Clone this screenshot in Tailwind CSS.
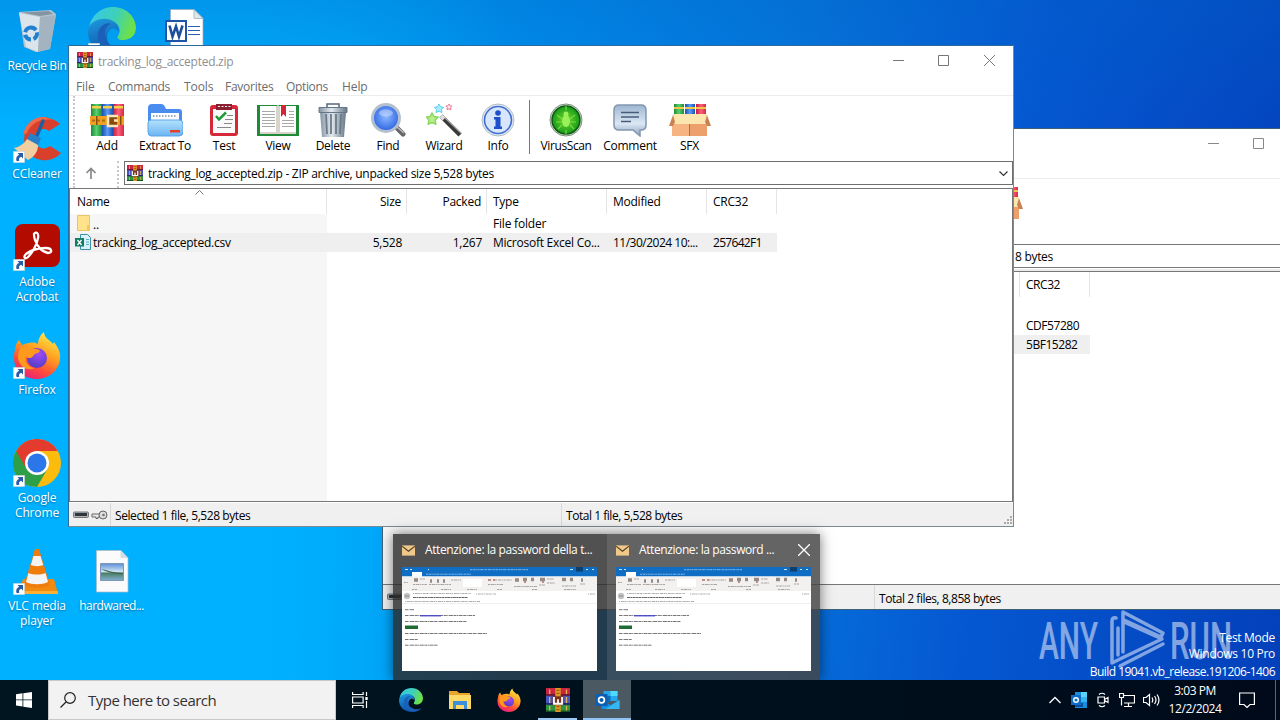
<!DOCTYPE html>
<html lang="en">
<head>
  <meta charset="UTF-8">
  <title>tracking_log_accepted.zip</title>
  <script src="https://cdn.jsdelivr.net/npm/@tailwindcss/browser@4"></script>
</head>
<body class="overflow-hidden bg-[#00adfb]">

  <!-- Icon sprites -->
  <svg class="absolute w-0 h-0" aria-hidden="true">
    <defs>
      <linearGradient id="gEdge" x1="0" y1="0" x2="1" y2="0.3"><stop offset="0" stop-color="#36c8ee"/><stop offset="0.6" stop-color="#3fd0b8"/><stop offset="1" stop-color="#6be04c"/></linearGradient>
      <linearGradient id="gEdge2" x1="0" y1="0" x2="0.4" y2="1"><stop offset="0" stop-color="#1f9be0"/><stop offset="1" stop-color="#0c4ea6"/></linearGradient>
      <linearGradient id="gFox" x1="0.8" y1="0" x2="0.3" y2="1"><stop offset="0" stop-color="#fff04a"/><stop offset="0.45" stop-color="#ff9a1f"/><stop offset="0.75" stop-color="#ff4a3c"/><stop offset="1" stop-color="#ea1f7d"/></linearGradient>
      <radialGradient id="gFoxIn" cx="0.6" cy="0.3" r="0.8"><stop offset="0" stop-color="#a04af5"/><stop offset="1" stop-color="#4a3cc0"/></radialGradient>
      <linearGradient id="gFolder" x1="0" y1="0" x2="0" y2="1"><stop offset="0" stop-color="#b4e2fc"/><stop offset="1" stop-color="#6ab4f2"/></linearGradient>
      <linearGradient id="gMetal" x1="0" y1="0" x2="1" y2="0"><stop offset="0" stop-color="#8594a3"/><stop offset="0.45" stop-color="#e2e9ef"/><stop offset="1" stop-color="#667686"/></linearGradient>
      <radialGradient id="gLens" cx="0.5" cy="0.45" r="0.6"><stop offset="0" stop-color="#8fb8ff"/><stop offset="1" stop-color="#1f5be0"/></radialGradient>
      <radialGradient id="gVirus"><stop offset="0" stop-color="#6fe02a"/><stop offset="1" stop-color="#17981a"/></radialGradient>
      <linearGradient id="gComment" x1="0" y1="0" x2="0" y2="1"><stop offset="0" stop-color="#9db6d2"/><stop offset="0.6" stop-color="#dbe7f3"/><stop offset="1" stop-color="#8ba4c2"/></linearGradient>
      <linearGradient id="gPic" x1="0" y1="0" x2="0" y2="1"><stop offset="0" stop-color="#5b8fd8"/><stop offset="0.5" stop-color="#d5e8f5"/><stop offset="0.55" stop-color="#4d7c62"/><stop offset="1" stop-color="#7fb0d0"/></linearGradient>
      <linearGradient id="gGreen" x1="0" y1="0" x2="1" y2="0"><stop offset="0" stop-color="#1d8a36"/><stop offset="0.5" stop-color="#58d070"/><stop offset="1" stop-color="#1d8a36"/></linearGradient>
      <linearGradient id="gBlue" x1="0" y1="0" x2="1" y2="0"><stop offset="0" stop-color="#1c4fb0"/><stop offset="0.5" stop-color="#5a9cf4"/><stop offset="1" stop-color="#1c4fb0"/></linearGradient>
      <linearGradient id="gRed" x1="0" y1="0" x2="1" y2="0"><stop offset="0" stop-color="#c01c40"/><stop offset="0.5" stop-color="#fa6078"/><stop offset="1" stop-color="#d82848"/></linearGradient>
    </defs>

    <symbol id="rar" viewBox="0 0 16 16">
      <path fill="#cc2340" d="M0 0h16v5H0z"/><path fill="#4a55c0" d="M0 5h16v6H0z"/><path fill="#2f9440" d="M0 11h16v5H0z"/>
      <path fill="#701838" d="M0 4h16v1.200H0z"/><path fill="#232a70" d="M0 10h16v1.200H0z"/><path fill="#145220" d="M0 15h16v1H0z"/>
      <path fill="#e0b050" d="M2 1h.9v3H2zM2 6h.9v4H2zM2 12h.9v3H2zM13.200 1h.9v3h-.9zM13.200 6h.9v4h-.9zM13.200 12h.9v3h-.9z"/>
      <path fill="#e09a24" d="M6.200 0h3.600v16H6.200z"/><path stroke="#8a4c08" stroke-width=".7" d="M7 1.500h2M7 3.500h2M7 12.500h2M7 14.500h2"/>
      <path fill="#7c3018" d="M4.500 5.500h7v6h-7z"/><path fill="none" stroke="#fff" stroke-width="1.200" d="M5.300 6v4.500h5.400V6M8 7.500v3"/>
    </symbol>

    <symbol id="shortcut" viewBox="0 0 12 12">
      <path fill="#fff" stroke="#b9c4cf" stroke-width=".6" d="M.3.3h11.400v11.400H.3z"/>
      <path fill="#2a5ca8" d="M4.500 2h5.500v5.500L8.200 5.800C6 6.500 5.800 8 6.200 10H3.600C2.600 7 4 4.700 6.200 3.800z"/>
    </symbol>

    <symbol id="edge" viewBox="0 0 48 48">
      <path fill="url(#gEdge)" d="M1 21C3 8 13 0 25 0c13 0 22 9 23 20 0 8-5 13-13 13-5 0-6-2-5-4 2-3 2-6 1-9-3-8-20-10-30 1z"/>
      <path fill="url(#gEdge2)" d="M0 25c0-10 11-14 19-13 7 1 12 6 12 13-2-4-7-5-10-1-5 7 0 19 12 20 4 0 8-1 12-4C40 46 33 48 25 48 11 48 0 38 0 25z"/>
      <path fill="#1b5fb8" d="M17 17c-6 3-9 9-6 17 3 9 12 14 20 13 6-1 11-4 14-7-5 3-10 3-14 2-9-2-15-9-14-17 0-4 3-7 6-8-2-1-4-1-6 0z"/>
    </symbol>

    <symbol id="firefox" viewBox="0 0 48 48">
      <path fill="url(#gFox)" d="M2 19c0-4 2-8 4-10l3 5c3-1 4-2 7-2 4-1 7 0 9 1 0-5 3-10 6-12 0 6 6 8 9 12l1-2c4 5 7 11 6 17-1 11-11 20-23 20C11 48 1 39 1 27c0-3 0-5 1-8z"/>
      <circle cx="24" cy="27" r="10" fill="url(#gFoxIn)"/>
      <path fill="#ff9a1f" d="M9 15c4-1 7 0 10 3 4 0 7 0 8 2-1 2-4 2-5 3-2 1-2 4-5 4-2 0-4 0-4-2-2 6 3 12 9 12-8 4-16-2-17-10 0-5 1-9 4-12z"/>
    </symbol>

    <symbol id="outlook" viewBox="0 0 24 24">
      <path fill="#28a8ea" d="M8 3h14v10H8z"/><path fill="#0f6cbd" d="M8 8h7v6H8z"/><path fill="#50d9ff" d="M15 3h7v5h-7z"/>
      <path fill="#1490df" d="M6 12l9 5 9-5v9H6z"/><path fill="#35b8f1" d="M24 12v9H10z"/>
      <path fill="#0a5fb4" d="M0 6h12v12H0z"/><circle cx="6" cy="12" r="2.900" fill="none" stroke="#fff" stroke-width="1.700"/>
    </symbol>

    <symbol id="outlookTray" viewBox="0 0 16 16">
      <path fill="#1590e0" d="M4 0h12v16H4z"/><path fill="#5ad4fa" d="M10 0h6v5h-6z"/><path fill="#35b4ee" d="M10 5h6v5h-6z"/><path fill="#0a4f9c" d="M4 11h8v4H4z"/>
      <path fill="#0f6cc4" d="M0 3h10v10H0z"/><circle cx="5" cy="8" r="2.300" fill="none" stroke="#fff" stroke-width="1.400"/>
    </symbol>

    <symbol id="sfx" viewBox="0 0 42 34">
      <path fill="url(#gGreen)" d="M5 1h10v13H5z"/><path fill="url(#gBlue)" d="M16 1h10v13H16z"/><path fill="url(#gRed)" d="M27 1h10v13H27z"/>
      <path fill="#f2c84a" d="M5 4h10v2H5zM16 4h10v2H16zM27 4h10v2H27z"/>
      <path fill="#fbe6b0" d="M4 11h34v10H4z"/><path fill="#eda06c" d="M3 21h35v12H3z"/><path fill="#f5b482" d="M3 21h17v12H3z"/>
      <path fill="#c98252" d="M4 12L0 23h4l2-4zM38 12l4 11h-4l-2-4z"/><path stroke="#b86e3c" d="M20.500 21v12"/>
    </symbol>

    <symbol id="envelope" viewBox="0 0 14 11"><path fill="#efc88a" d="M0 0h14v11H0z"/><path fill="none" stroke="#4a3a24" stroke-width="1.200" d="M0 .8l7 5.500 7-5.500"/></symbol>

    <symbol id="thumb" viewBox="0 0 195 104">
      <path fill="#fff" d="M0 0h195v104H0z"/><path fill="#0f6dc4" d="M0 0h195v9.500H0z"/><path fill="#fff" d="M10 5h10v5H10z"/>
      <path fill="#f3f1ef" d="M0 9.500h195V24H0z"/><path fill="#fff" d="M61 12h19v8H61z"/><path fill="#0c3e6e" d="M174 0h7v4.500h-7z"/>
      <path stroke="#8cc0ec" stroke-dasharray="2 .6 3 .5 1 .5" d="M68 2.700h58M24 7.200h45" stroke-width=".9"/><path stroke="#d6e8f6" stroke-width="1.200" d="M3 2.500h3M8 2.500h2M26 2.500h1M168 2.500h3M184 2.500h2M190 2.500h2"/>
      <path stroke="#958a84" stroke-width="3.500" d="M12 13h4M28 14h2M35 14h2M41 14h2M113 13h4M121 12.500h4M129 12.500h3M138 12.500h5M160 12.500h4M168 12.500h3M179 13h2"/>
      <path stroke="#c09088" stroke-width="2" d="M86 13h3M91 13h2M116 12h1M122 15h2M140 15h2"/>
      <path stroke="#a39c98" stroke-width=".9" stroke-dasharray="2 .6 4 .6 1 .5" d="M2 15.500h4M18 12h5M11 17.500h14M27 17.500h22M49 13h10M86 17.500h15M93 13h17M112 19.500h23M137 18h6M145 12h7M145 16h8M160 19h14M178 17h5M10 22.500h5M39 22.500h10M65 22.500h10M95 22.500h5M130 22.500h5M162 22.500h12"/>
      <circle cx="5" cy="29" r="3.200" fill="#c4c4c4"/><path stroke="#888" d="M3 29h4"/>
      <path stroke="#999" stroke-width=".8" stroke-dasharray="1 .8 3 .5 2 .5" d="M11 26.500h58M74 27h20M186 27h7M3 34.500h75"/><path stroke="#666" stroke-width="1" stroke-dasharray="3 .4 2 .3" d="M11 30.500h55"/>
      <path stroke="#e4e4e4" stroke-width=".6" d="M0 36.500h195"/>
      <path stroke="#777" stroke-width="1" stroke-dasharray="3 .5 1 .6 4 .6" d="M3 42.700h9M3 48.500h70M3 54.500h62M3 66.500h82M3 72.500h13M3 78.200h33"/>
      <path stroke="#4040d0" stroke-width="1.200" d="M18 48.800h21"/><path fill="#1f6b34" d="M3 58.500h13v3.500H3z"/>
    </symbol>

    <symbol id="drive" viewBox="0 0 36 12">
      <rect x=".5" y="3" width="15" height="5.500" rx="1" fill="#aab2b8" stroke="#777"/><path fill="#2f363b" d="M2 4h12v3H2z"/>
      <path fill="#e8e8e8" stroke="#666" d="M19 5h9v3h-3v1.500h-2V8h-4z"/><circle cx="30" cy="6" r="4" fill="#ddd" stroke="#666"/><circle cx="30.500" cy="6" r="1.300" fill="#777"/>
    </symbol>
  </svg>

  <div class="relative w-[1280px] h-[720px] overflow-hidden font-['Open_Sans',sans-serif] text-xs text-black">

    <!-- Wallpaper -->
    <div class="absolute inset-0 bg-[linear-gradient(97deg,#00a4f6_0%,#00adfb_20%,#0090ee_40%,#0675dc_60%,#0558d2_76%,#0340ba_100%)]"></div>
    <div class="absolute left-0 top-0 w-[500px] h-full bg-[linear-gradient(90deg,#00b1ff_50%,transparent)]"></div>
    <div class="absolute left-0 top-0 w-full h-32 bg-[linear-gradient(180deg,#0060c455,transparent)]"></div>

    <!-- Desktop icons -->
    <div class="absolute left-0 top-[7px] flex text-white text-[12px] leading-[15px] tracking-[-0.15px] text-center [text-shadow:0_1px_2px_#00406099]">
      <div class="w-[74px] flex flex-col">
        <div class="h-[108px] flex flex-col items-center gap-[3px]">
          <svg class="w-12 h-12 shrink-0" viewBox="0 0 48 48">
            <path fill="#b4c4ce" d="M6 5l32-2 5 4-6 35-14 3-12-5z"/><path fill="#dbe4ea" d="M6 6l21 4-2 35-12-5z"/><path fill="#a3b4c0" d="M27 10l16-2-6 34-12 3z"/><path fill="#8494a0" d="M9 5.500l27-1.500 4 3-13 2z"/>
            <path fill="none" stroke="#1f7fd0" stroke-width="4" stroke-dasharray="8 2.500" d="M18 20.500a6 6 0 1 0 .1 0z"/>
          </svg>
          <span class="whitespace-nowrap tracking-[-0.35px]">Recycle Bin</span>
        </div>
        <div class="h-[108px] flex flex-col items-center gap-[3px]">
          <span class="relative w-12 h-12 shrink-0">
            <svg class="w-12 h-12" viewBox="0 0 48 48">
              <path fill="#d8402c" d="M47 9L36 16c-7-5-15 0-14 9 1 8 9 11 15 6l11 7C39 48 24 47 17 39 8 29 10 13 20 6c8-6 20-4 27 3z"/><path fill="#ee6a4a" d="M10 20C12 8 22 1 32 2l8 3c-14-2-22 4-26 13z"/>
              <path stroke="#1d5fa0" stroke-width="3.500" stroke-linecap="round" d="M30 6l-7 17"/><path fill="#2a80c8" d="M17 18l11 5-3 8-11-6z"/><path fill="#f2cfa0" d="M14 24l11 6c0 7-4 12-10 15L1 33c5-1 10-4 13-9z"/>
            </svg>
            <svg class="absolute left-0 bottom-0 w-3 h-3"><use href="#shortcut"/></svg>
          </span>
          <span>CCleaner</span>
        </div>
        <div class="h-[108px] flex flex-col items-center gap-[3px]">
          <span class="relative w-12 h-12 shrink-0">
            <svg class="w-12 h-12" viewBox="0 0 48 48"><rect x="2" y="1" width="45" height="43" rx="8" fill="#b30b00"/>
              <path fill="none" stroke="#fff" stroke-width="2.300" stroke-linejoin="round" d="M21 11c2-3 5-1 4 4-1 7-6 15-10 19-3 3-5 0-2-3 5-4 13-6 20-6 6 0 7 5 2 5-6-1-11-7-13-13-1-3-1-5-1-6z"/></svg>
            <svg class="absolute left-0 bottom-0 w-3 h-3"><use href="#shortcut"/></svg>
          </span>
          <span>Adobe<br>Acrobat</span>
        </div>
        <div class="h-[108px] flex flex-col items-center gap-[3px]">
          <span class="relative w-12 h-12 shrink-0">
            <svg class="w-12 h-12"><use href="#firefox"/></svg>
            <svg class="absolute left-0 bottom-0 w-3 h-3"><use href="#shortcut"/></svg>
          </span>
          <span>Firefox</span>
        </div>
        <div class="h-[108px] flex flex-col items-center gap-[3px]">
          <span class="relative w-12 h-12 shrink-0">
            <svg class="w-12 h-12" viewBox="0 0 48 48">
              <circle cx="24" cy="24" r="24" fill="#fbbc0e"/><path fill="#2c9f47" d="M24 24L3.200 12A24 24 0 0 0 24 48l10.400-18z"/><path fill="#e33b2e" d="M24 12h20.800A24 24 0 0 0 3.200 12l10.400 18z"/>
              <circle cx="24" cy="24" r="12" fill="#fff"/><circle cx="24" cy="24" r="9.500" fill="#2b76e8"/>
            </svg>
            <svg class="absolute left-0 bottom-0 w-3 h-3"><use href="#shortcut"/></svg>
          </span>
          <span>Google<br>Chrome</span>
        </div>
        <div class="h-[108px] flex flex-col items-center gap-[3px]">
          <span class="relative w-12 h-12 shrink-0">
            <svg class="w-12 h-12" viewBox="0 0 48 48">
              <path fill="#f28a10" d="M10 32h31l4 15H5z"/><path fill="#ffb030" d="M5 44h40v3H5z"/>
              <path fill="#f07c0c" d="M22 2h4l11 36c-5 4-21 4-26 0z"/><path fill="#f4f4f4" d="M20.500 9h7l2.700 9c-3 1.500-9 1.500-12.300 0zM15.500 26c5 2 12 2 17 0l2.500 9c-6 3-16 3-22 0z"/>
            </svg>
            <svg class="absolute left-0 bottom-0 w-3 h-3"><use href="#shortcut"/></svg>
          </span>
          <span>VLC media<br>player</span>
        </div>
      </div>
      <div class="w-[75px] flex flex-col">
        <div class="h-[540px] flex flex-col items-center relative">
          <svg class="w-12 h-12"><use href="#edge"/></svg>
          <svg class="absolute left-[14px] top-9 w-3 h-3"><use href="#shortcut"/></svg>
        </div>
        <div class="flex flex-col items-center gap-[3px]">
          <svg class="w-12 h-12" viewBox="0 0 48 48">
            <path fill="#fbfbfb" stroke="#b0bcc6" stroke-width=".7" d="M8.500 3.500H33l7 7.500v34H8.500z"/><path fill="#d4dde4" d="M32.500 3.500V11H40z"/>
            <path fill="url(#gPic)" stroke="#7d96b8" d="M12.500 16.500h23v17h-23z"/><path fill="#3f6a55" d="M13 22c6 3 14 6 22 5v-1c-9 0-16-3-22-4z"/>
          </svg>
          <span class="tracking-[-0.5px]">hardwared...</span>
        </div>
      </div>
      <div class="w-[70px] flex justify-center">
        <svg class="w-12 h-12" viewBox="0 0 48 48">
          <path fill="#fff" stroke="#98a8b8" stroke-width=".7" d="M10.500 2.500H34l9 9v35H10.500z"/><path fill="#dfe6ec" stroke="#98a8b8" stroke-width=".7" d="M34 2.500v9h9z"/>
          <path stroke="#2a5fb4" d="M28 19.500h12M28 23.500h12M28 27.500h12"/><path fill="#fff" stroke="#1f54a8" stroke-width="2" d="M6 14h20v20H6z"/><path fill="none" stroke="#1f4f9c" stroke-width="2.600" d="M9.500 18.500l3 11 3.500-10 3 10 3.500-11"/>
        </svg>
      </div>
    </div>

    <!-- Watermark -->
    <svg class="absolute left-[1036px] top-[606px] w-[200px] h-[66px] opacity-50" viewBox="0 0 200 66" fill="#fff">
      <text x="3" y="53" font-family="Roboto" font-weight="500" font-size="51" textLength="59" lengthAdjust="spacingAndGlyphs">ANY</text>
      <text x="134" y="53" font-family="Roboto" font-weight="500" font-size="51" textLength="62" lengthAdjust="spacingAndGlyphs">RUN</text>
      <path fill="none" stroke="#fff" stroke-width="3.500" stroke-linejoin="round" stroke-linecap="round" d="M87 46V6l40 21-2 4-37-17M80 12q-4-1-4 3v42l10-5 40-19-38-17M82 22v27M84 60l43-22"/>
    </svg>
    <div class="absolute right-[5px] top-[630px] flex flex-col items-end text-white text-[12px] leading-[16px] tracking-[-0.3px]">
      <span>Test Mode</span>
      <span>Windows 10 Pro</span>
      <span class="mt-0.5 tracking-[-0.55px]">Build 19041.vb_release.191206-1406</span>
    </div>

    <!-- Background archive window -->
    <section class="absolute left-[382px] top-[128px] w-[946px] h-[482px] border border-[#40607a] bg-white flex flex-col">
      <div class="h-[31px] shrink-0 flex items-center justify-end pr-[17px] gap-[34px] text-[#888] pb-[3px]">
        <svg class="w-[11px] h-[11px]" viewBox="0 0 11 11"><path stroke="currentColor" d="M0 5.500h11"/></svg>
        <svg class="w-[11px] h-[11px]" viewBox="0 0 11 11"><path fill="none" stroke="currentColor" d="M.5.5h10v10H.5z"/></svg>
        <svg class="w-[11px] h-[11px] ml-px" viewBox="0 0 11 11"><path stroke="currentColor" d="M0 0l11 11M11 0L0 11"/></svg>
      </div>
      <div class="h-[18px] shrink-0"></div>
      <div class="h-[66px] shrink-0 border-t border-[#ececec] pl-[598px] pt-[7px]"><svg class="w-[42px] h-[34px]"><use href="#sfx"/></svg></div>
      <div class="h-[24px] ml-[55px] border border-[#777] flex items-center pl-[576px] pt-0.5 shrink-0 tracking-[-0.3px]">8 bytes</div>
      <div class="h-[3px] bg-[#ececec] border-t border-white shrink-0"></div>
      <div class="grow border-y border-[#777] flex">
        <div class="w-[257px] mt-[25px] bg-[#f6f6f6]"></div>
        <div class="grow"></div>
        <div class="w-[308px] flex flex-col tracking-[-0.45px]">
          <div class="flex h-[25px]"><span class="w-[71px] border-x border-[#e5e5e5] pl-1.5 leading-[26px]">CRC32</span></div>
          <div class="h-[19px] mt-[19px] pl-[7px] leading-[20px]">CDF57280</div>
          <div class="flex h-[19px] -ml-8"><span class="w-[103px] bg-[#efefef] pl-[39px] leading-[19px]">5BF15282</span></div>
        </div>
      </div>
      <div class="h-[24px] shrink-0 bg-[#f0f0f0] flex items-center">
        <svg class="w-9 h-3 ml-[4px]"><use href="#drive"/></svg>
        <span class="w-[451px] h-full border-x border-[#d8d8d8] ml-[1px]"></span>
        <span class="pl-[4px] pt-[3px] tracking-[-0.45px]">Total 2 files, 8,858 bytes</span>
      </div>
    </section>

    <!-- Front archive window -->
    <section class="absolute left-[68px] top-[45px] w-[946px] h-[482px] border border-[#2a6a9c] border-b-[#7a8a94] border-r-[#7a8a94] bg-white flex flex-col">
      <div class="h-[31px] shrink-0 flex items-center pl-2">
        <svg class="w-4 h-4 -mt-[3px]"><use href="#rar"/></svg>
        <span class="pl-[5px] text-[#909090] tracking-[-0.26px]">tracking_log_accepted.zip</span>
        <div class="ml-auto flex gap-[34px] pr-[18px] text-[#777] -mt-[3px]">
          <svg class="w-[11px] h-[11px]" viewBox="0 0 11 11"><path stroke="currentColor" d="M0 5.500h11"/></svg>
          <svg class="w-[11px] h-[11px]" viewBox="0 0 11 11"><path fill="none" stroke="currentColor" d="M.5.5h10v10H.5z"/></svg>
          <svg class="w-[11px] h-[11px] ml-px" viewBox="0 0 11 11"><path stroke="currentColor" d="M0 0l11 11M11 0L0 11"/></svg>
        </div>
      </div>
      <nav class="h-[18px] shrink-0 flex pl-[7px] leading-[19px] text-[#6c6c6c] tracking-[-0.1px]">
        <a class="w-8">File</a><a class="w-[76px] tracking-[-0.25px]">Commands</a><a class="w-[41px]">Tools</a><a class="w-[61px] tracking-[-0.25px]">Favorites</a><a class="w-[56px] tracking-[-0.35px]">Options</a><a>Help</a>
      </nav>

      <div class="shrink-0 border-t border-[#ececec] h-[93px] pl-[4px]">
        <div class="flex flex-col h-full border-l-2 border-dotted border-[#c8c8c8]">
          <!-- Toolbar -->
          <div class="flex pl-[5px] pt-[7px] h-[65px] text-center leading-4 whitespace-nowrap tracking-[-0.25px]">
            <div class="w-[54px] flex flex-col items-center gap-px">
              <svg class="w-9 h-[34px]" viewBox="0 0 36 34"><path fill="url(#gGreen)" d="M2 1h11v32H2z"/><path fill="url(#gBlue)" d="M13 1h11v32H13z"/><path fill="url(#gRed)" d="M24 1h11v32H24z"/><path fill="#f5cf45" d="M3 3h9v2.500H3zM14 3h9v2.500h-9zM25 3h9v2.500h-9z"/><path fill="#f0a020" d="M1 13h34v9H1z"/><path stroke="#b06a10" stroke-width="2" stroke-dasharray="3 2" d="M3 17.500h14"/><path fill="#8c4a10" d="M7 13h1.500v9H7zM31 13h1.500v9H31z"/><path fill="#8c4a10" d="M20 14h8v8h-8z"/><path fill="none" stroke="#fbe8b8" stroke-width="2.500" d="M29 13H19v10h10M25 17.500h4"/></svg>
              <span>Add</span></div>
            <div class="w-[62px] flex flex-col items-center gap-px">
              <svg class="w-9 h-[34px]" viewBox="0 0 36 34"><path fill="#4a8cf0" d="M1 5q0-4 4-4h9q3 0 4 3l1 2h13q3 0 3 3v13H1z"/><path fill="#fff" d="M4 10h28v10H4z"/><path stroke="#7f90a8" stroke-width="1.500" stroke-dasharray="1.500 1.500" d="M6 13h24"/><path fill="url(#gFolder)" stroke="#5ba4ec" d="M1 20q0-3 3-3h28q4 0 4 3v9q0 4-4 4H4q-3 0-3-4z"/><path fill="#e0402c" d="M23 27h10v2.500H23z"/></svg>
              <span class="tracking-[-0.4px]">Extract To</span></div>
            <div class="w-[56px] flex flex-col items-center gap-px">
              <svg class="w-8 h-[34px]" viewBox="0 0 32 34"><rect x="2" y="2" width="28" height="31" rx="3" fill="#d62838"/><path fill="#fafafa" d="M5 6h22v24H5z"/><path fill="#8a2030" d="M8 1h16v6H8z"/><path stroke="#f0f0f0" stroke-dasharray="2 1.500" d="M10 3.500h13"/><path fill="none" stroke="#1e9a38" stroke-width="2.500" d="M8 13l3 3.500 7-7"/><path stroke="#888" d="M19 12.500h6M17 16.500h8M16 20.500h8M9 24.500h14"/></svg>
              <span>Test</span></div>
            <div class="w-[52px] flex flex-col items-center gap-px">
              <svg class="w-11 h-[34px]" viewBox="0 0 44 34"><path fill="#1f8a38" d="M1 2h20l1 1 1-1h20v31H1z"/><path fill="#fff" d="M4 3h18v26H4zM22 3h18v26H22z"/><path fill="#d8d4cc" d="M20 3h4v26h-4zM4 29h36v2H4z"/><path stroke="#a8a8a8" d="M6 8.500h13M6 11.500h13M6 14.500h13M6 17.500h13M6 20.500h13M6 23.500h13M26 17.500h12M26 20.500h12M26 23.500h12M33 8.500h5M33 11.500h5M33 14.500h5"/><path fill="#d02838" d="M25 2h5v12l-2.500-3-2.500 3z"/></svg>
              <span>View</span></div>
            <div class="w-[58px] flex flex-col items-center gap-px">
              <svg class="w-9 h-[34px]" viewBox="0 0 36 34"><path fill="url(#gMetal)" d="M5 9h26l-2 25H7z"/><path stroke="#6b7a89" stroke-width="1.800" d="M11 11l1 20M16 11v20M21 11v20M26 11l-1 20"/><path fill="url(#gMetal)" stroke="#66778a" d="M4 4.500h28v5H4z"/><path fill="none" stroke="#56677a" stroke-width="1.500" d="M12 4V1h12v3"/></svg>
              <span>Delete</span></div>
            <div class="w-[52px] flex flex-col items-center gap-px">
              <svg class="w-9 h-[34px]" viewBox="0 0 36 34"><path stroke="#666" stroke-width="5" stroke-linecap="round" d="M26 24l7 7"/><path stroke="#bbb" stroke-width="1.500" d="M26 23l8 7"/><circle cx="16" cy="15" r="13.500" fill="url(#gLens)" stroke="#b4c0cf" stroke-width="3"/><ellipse cx="16" cy="10" rx="7" ry="3.500" fill="#fff" opacity=".35"/></svg>
              <span>Find</span></div>
            <div class="w-[60px] flex flex-col items-center gap-px">
              <svg class="w-9 h-[34px]" viewBox="0 0 36 34"><path stroke="#3a3a3a" stroke-width="4.500" d="M15 13l19 19"/><path stroke="#aaa" stroke-width="1.200" d="M16 12l19 18"/><path stroke="#ddd" stroke-width="4" d="M15 13l3 3"/><path fill="#a8ecfb" stroke="#5cd0f0" d="M13 1l1.500 2.800 3 .5-2 2.200.5 3-3-1.300-3 1.300.5-3-2-2.200 3-.5z"/><path fill="#ffecef" stroke="#f07a90" d="M23 1l1 1.800 2 .3-1.500 1.500.4 2.200-2-1-1.900 1 .3-2.200L20 3.100l2-.3z"/><path fill="#b8ee90" stroke="#86d858" stroke-width="1.400" d="M6 10l2 3.500 4 .6-2.800 3 .6 4L6 19.500l-3.800 1.600.6-4-2.300-3 3.600-.6z"/></svg>
              <span>Wizard</span></div>
            <div class="w-[48px] flex flex-col items-center gap-px">
              <svg class="w-9 h-[34px]" viewBox="0 0 36 34"><circle cx="18" cy="17" r="16" fill="#e4eaf2" stroke="#b0bccb"/><circle cx="18" cy="17" r="13.500" fill="#d8e6fb" stroke="#3f6ed4" stroke-width="1.600"/><circle cx="18" cy="10" r="2.800" fill="#1f50cc"/><path fill="#1f50cc" d="M14 14h6.500v9.500H22V26h-8v-2.500h1.500v-7H14z"/></svg>
              <span>Info</span></div>
            <div class="w-[15px] pl-[7px] -mt-[3px]"><div class="w-px h-[54px] bg-[#777]"></div></div>
            <div class="w-[58px] flex flex-col items-center gap-px">
              <svg class="w-9 h-[34px]" viewBox="0 0 36 34"><circle cx="18" cy="17" r="16" fill="#e3e8e3" stroke="#7d8a7d"/><circle cx="18" cy="17" r="14" fill="url(#gVirus)" stroke="#0b5c10" stroke-width="1.500"/><ellipse cx="18" cy="18" rx="4" ry="6" fill="#9cf05a"/><circle cx="18" cy="11" r="2.500" fill="#9cf05a"/><path fill="none" stroke="#7cd840" stroke-width="1.200" d="M14 16l-5-4M22 16l5-4M14 19H8M22 19h6M14 22l-4 4M22 22l4 4M18 3v4M18 27v4"/></svg>
              <span class="tracking-[-0.4px]">VirusScan</span></div>
            <div class="w-[70px] flex flex-col items-center gap-px">
              <svg class="w-9 h-[34px]" viewBox="0 0 36 34"><path fill="url(#gComment)" stroke="#8496b0" stroke-width="1.500" d="M7 2h22q5 0 5 5v15q0 5-5 5h-1v6l-7-6H7q-5 0-5-5V7q0-5 5-5z"/><path stroke="#4a5d78" stroke-width="1.600" d="M9 9.500h18M9 14h18M9 18.500h10"/></svg>
              <span>Comment</span></div>
            <div class="w-[49px] flex flex-col items-center gap-px">
              <svg class="w-[42px] h-[34px]"><use href="#sfx"/></svg>
              <span>SFX</span></div>
          </div>
          <!-- Address bar -->
          <div class="flex grow">
            <div class="w-[42px] pl-[10px] pt-[6px]"><svg class="w-3 h-3" viewBox="0 0 12 12"><path fill="none" stroke="#888" stroke-width="1.700" d="M6 12V1.500M1.500 6L6 1.500 10.500 6"/></svg></div>
            <div class="w-[7px] border-l-2 border-dotted border-[#c8c8c8]"></div>
            <div class="grow h-[24px] border border-[#6e6e6e] flex items-center pl-0.5 pr-1">
              <svg class="w-4 h-4"><use href="#rar"/></svg>
              <span class="pl-[5px] pt-0.5 tracking-[-0.29px]">tracking_log_accepted.zip - ZIP archive, unpacked size 5,528 bytes</span>
              <svg class="w-[9px] h-[9px] ml-auto" viewBox="0 0 9 9"><path fill="none" stroke="#333" stroke-width="1.200" d="M.5 2.500l4 4 4-4"/></svg>
            </div>
          </div>
        </div>
      </div>

      <!-- File list -->
      <div class="grow border border-[#777] flex flex-col relative">
        <div class="grid grid-cols-[257px_80px_80px_120px_100px_70px] h-[25px] leading-[25px] tracking-[-0.25px]">
          <span class="pl-[7px] border-r border-[#e5e5e5]">Name</span>
          <span class="pr-[5px] text-right border-r border-[#e5e5e5]">Size</span>
          <span class="pr-[5px] text-right border-r border-[#e5e5e5]">Packed</span>
          <span class="pl-1.5 border-r border-[#e5e5e5]">Type</span>
          <span class="pl-1.5 border-r border-[#e5e5e5]">Modified</span>
          <span class="pl-1.5 border-r border-[#e5e5e5]">CRC32</span>
        </div>
        <svg class="absolute left-[125px] top-px w-[9px] h-[5px]" viewBox="0 0 9 5"><path fill="none" stroke="#777" d="M.5 4.500l4-4 4 4"/></svg>
        <div class="grid grid-cols-[257px_80px_80px_120px] h-[19px] leading-[20px] tracking-[-0.2px]">
          <span class="bg-[#f6f6f6] flex pl-[7px] pt-px gap-[3px]"><svg class="w-[13px] h-4" viewBox="0 0 13 16"><path fill="#ffe28a" stroke="#e8c462" d="M.5.500h12v15H.5z"/><path fill="#f4c95a" d="M10 10h3v6h-3z"/></svg>..</span>
          <span></span><span></span><span class="pl-1.5">File folder</span>
        </div>
        <div class="grid grid-cols-[257px_80px_80px_120px_100px_70px] w-[707px] h-[19px] leading-[19px] bg-[#efefef] tracking-[-0.25px] whitespace-nowrap">
          <span class="flex pl-[5px] pt-px gap-[2px] leading-[17px] tracking-[-0.22px]"><svg class="w-4 h-4" viewBox="0 0 16 16"><path fill="#d8f0fa" stroke="#3c90a8" d="M5.500.500h7l3 3v12h-10z"/><path stroke="#5ab0c8" d="M11 5.500h3M11 8h3M11 10.500h3"/><path fill="#0f7c64" d="M0 4h9v8.500H0z"/><path stroke="#fff" stroke-width="1.300" d="M2.500 6l4 5M6.500 6l-4 5"/></svg>tracking_log_accepted.csv</span>
          <span class="pr-[5px] text-right">5,528</span>
          <span class="pr-[5px] text-right">1,267</span>
          <span class="pl-1.5">Microsoft Excel Co...</span>
          <span class="pl-1.5 tracking-[-0.5px]">11/30/2024 10:...</span>
          <span class="pl-1.5 tracking-[-0.7px]">257642F1</span>
        </div>
        <div class="w-[257px] grow bg-[#f6f6f6]"></div>
      </div>

      <!-- Status bar -->
      <div class="h-[24px] shrink-0 bg-[#f0f0f0] flex items-center tracking-[-0.42px] border-t border-white">
        <svg class="w-9 h-3 ml-[4px]"><use href="#drive"/></svg>
        <span class="w-[452px] h-full border-x border-[#d8d8d8] ml-[1px] pl-[4px] pt-[5px]">Selected 1 file, 5,528 bytes</span>
        <span class="pl-[4px] pt-0.5 tracking-[-0.46px]">Total 1 file, 5,528 bytes</span>
        <svg class="w-2.5 h-2.5 ml-auto mt-2.5" viewBox="0 0 10 10"><path fill="#aaa" d="M7 1h2v2H7zM4 4h2v2H4zM7 4h2v2H7zM1 7h2v2H1zM4 7h2v2H4zM7 7h2v2H7z"/></svg>
      </div>
    </section>

    <!-- Taskbar previews -->
    <div class="absolute left-[393px] top-[534px] h-[146px] w-[427px] flex text-white shadow-[0_0_12px_#0008]">
      <div class="w-[214px] bg-[#2a2a2a]/81 pl-[9px]">
        <div class="h-[33px] flex items-center"><svg class="w-[13px] h-[11px]"><use href="#envelope"/></svg><span class="pl-[10px] pb-0.5 tracking-[-0.38px] whitespace-nowrap">Attenzione: la password della t...</span></div>
        <svg class="w-[195px] h-[104px]"><use href="#thumb"/></svg>
      </div>
      <div class="w-[213px] bg-[#444]/83 pl-[9px]">
        <div class="h-[33px] flex items-center pr-[10px]"><svg class="w-[13px] h-[11px]"><use href="#envelope"/></svg><span class="pl-[10px] pb-0.5 tracking-[-0.4px] whitespace-nowrap">Attenzione: la password ...</span>
          <svg class="w-3 h-3 ml-auto -mt-0.5" viewBox="0 0 12 12"><path stroke="#fff" stroke-width="1.300" d="M0 0l12 12M12 0L0 12"/></svg></div>
        <svg class="w-[195px] h-[104px]"><use href="#thumb"/></svg>
      </div>
    </div>

    <!-- Taskbar -->
    <footer class="absolute left-0 bottom-0 w-full h-10 flex bg-[linear-gradient(90deg,#00151f,#00101c_60%,#000a1a)] text-white">
      <div class="w-12 flex items-center justify-center"><svg class="w-4 h-4" viewBox="0 0 16 16"><path fill="#fff" d="M0 2.200L6.500 1.300v6.200H0zM7.300 1.200L16 0v7.500H7.300zM0 8.300h6.500v6.200L0 13.600zM7.300 8.300H16V16l-8.700-1.200z"/></svg></div>
      <div class="w-72 bg-[#f2f2f2] border border-[#c8c8c8] flex items-center pl-[11px] text-[#333] text-[15px]">
        <svg class="w-4 h-4" viewBox="0 0 16 16"><circle cx="10" cy="6" r="5.300" fill="none" stroke="#222" stroke-width="1.200"/><path stroke="#222" stroke-width="1.200" d="M6 10L.5 15.500"/></svg>
        <span class="pl-3 tracking-[-0.52px]">Type here to search</span>
      </div>
      <div class="w-12 flex items-center justify-center"><svg class="w-4 h-4" viewBox="0 0 16 16"><path fill="none" stroke="#fff" stroke-width="1.200" d="M.6 0v2.500h10.500V0M.6 16v-2.500h10.500V16M.6 5h10.500v6H.6zM14.500 0v4M14.500 9v7"/><path fill="#fff" d="M13.300 5h2.400v3h-2.400z"/></svg></div>
      <div class="w-[54px] flex items-center justify-center"><svg class="w-6 h-6"><use href="#edge"/></svg></div>
      <div class="w-[44px] flex items-center justify-center"><svg class="w-[22px] h-5" viewBox="0 0 22 20"><path fill="#e8a52c" d="M0 1h8l2 2h11v4H0z"/><path fill="#ffd968" d="M0 5h22v14H0z"/><path fill="#3c8fd8" d="M4 11h14v8h-3v-4H7v4H4z"/></svg></div>
      <div class="w-[54px] flex items-center justify-center"><svg class="w-6 h-6"><use href="#firefox"/></svg></div>
      <div class="w-[39px] ml-0.5 pt-0.5 flex items-center justify-center border-b-2 border-[#9ac8f2]"><svg class="w-6 h-6"><use href="#rar"/></svg></div>
      <div class="w-12 ml-[6px] pt-0.5 flex items-center justify-center bg-[#4b5963] border-b-2 border-[#8fc4f5]"><svg class="w-[25px] h-6"><use href="#outlook"/></svg></div>
      <div class="ml-auto flex items-center pr-1">
        <svg class="w-3 h-2 mr-[10px]" viewBox="0 0 12 8"><path fill="none" stroke="#fff" stroke-width="1.300" d="M.5 7L6 1.500 11.500 7"/></svg>
        <svg class="w-4 h-4 mr-[10px]"><use href="#outlookTray"/></svg>
        <svg class="w-3 h-4 mr-[10px]" viewBox="0 0 12 16"><path fill="none" stroke="#fff" stroke-width="1.200" d="M1 5h6.500v6H1zM7.500 7.500L11 5.500v5l-3.500-2M2 2.500Q5 0 8 2.500M2 13.500Q5 16 8 13.500"/></svg>
        <svg class="w-4 h-4 mr-2" viewBox="0 0 16 16"><path fill="none" stroke="#fff" stroke-width="1.200" d="M5 3.500h10.500v7.500H5M9.500 11v3M5 14.500h8M.5 1.500h4v4h-4zM2.500 5.500v8"/></svg>
        <svg class="w-[17px] h-4 mr-2" viewBox="0 0 17 16"><path fill="none" stroke="#fff" stroke-width="1.200" d="M.5 5.500H3l3.500-3v11l-3.500-3H.5zM9 5.500q1.500 2.500 0 5M11.500 4q3 4 0 8M14 2.500q4 5.500 0 11"/></svg>
        <div class="w-[54px] text-center leading-[18px] tracking-[-0.45px] -mt-px">3:03 PM<br>12/2/2024</div>
        <svg class="w-4 h-4 ml-[17px] mr-5" viewBox="0 0 16 16"><path fill="none" stroke="#fff" stroke-width="1.200" d="M.6 1h14.800v11.500H11l-3 3-3-3H.6z"/></svg>
        <div class="w-px h-10 bg-[#5c6672]"></div>
      </div>
    </footer>
  </div>
</body>
</html>
